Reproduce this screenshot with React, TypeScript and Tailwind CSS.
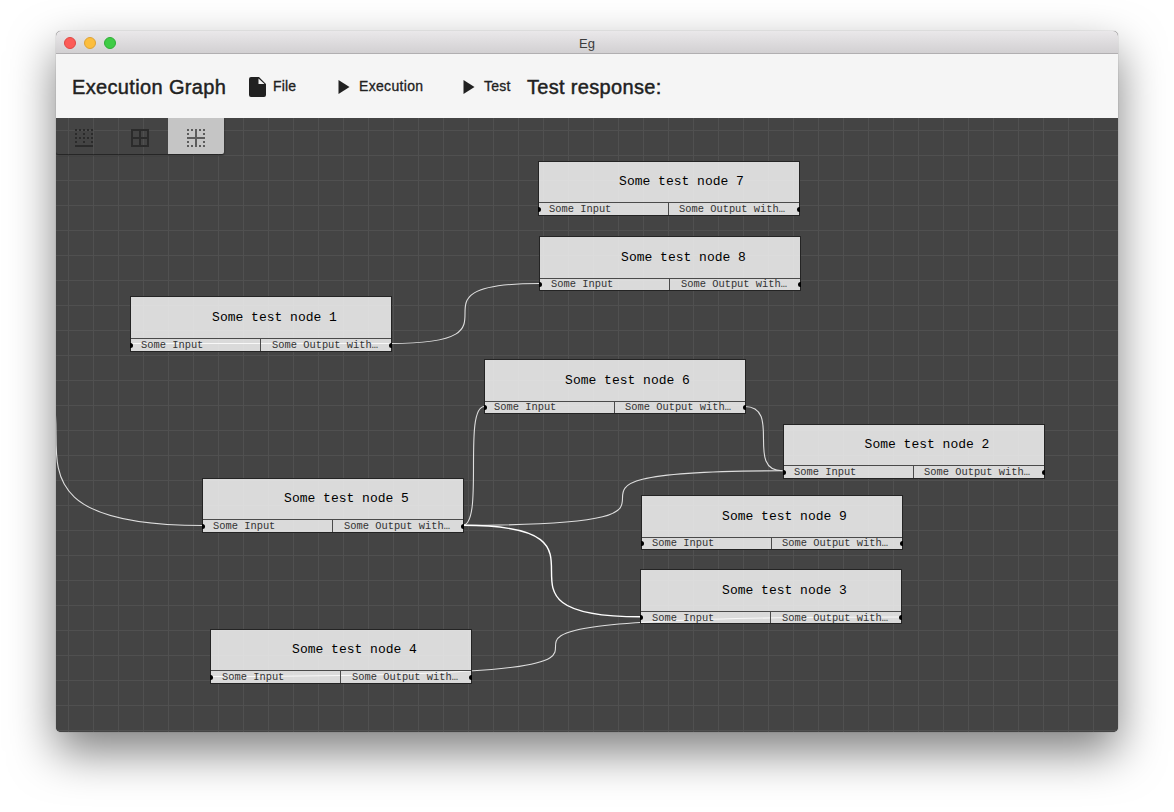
import React from "react";

type NodeSpec = {
  id: number;
  x: number;
  y: number;
  ny: number;
  by: number;
  title: string;
  input: string;
  output: string;
};

// x, y: top-left corner; ny: title divider; by: bottom edge
const nodes: NodeSpec[] = [
  { id: 7, x: 482, y: 43, ny: 84, by: 97, title: "pl-[25px] pb-[2px]", input: "pl-[10px]", output: "pl-[10px]" },
  { id: 8, x: 483, y: 118, ny: 160, by: 172, title: "pl-[27px]", input: "pl-[11px]", output: "pl-[11px]" },
  { id: 1, x: 74, y: 178, ny: 220, by: 233, title: "pl-[27px]", input: "pl-[10px]", output: "pl-[11px]" },
  { id: 6, x: 428, y: 241, ny: 283, by: 295, title: "pl-[25px]", input: "pl-[9px]", output: "pl-[10px]" },
  { id: 2, x: 727, y: 306, ny: 347, by: 360, title: "pl-[26px] pb-[2px]", input: "pl-[10px]", output: "pl-[10px]" },
  { id: 5, x: 146, y: 360, ny: 401, by: 414, title: "pl-[27px] pb-[2px]", input: "pl-[10px]", output: "pl-[11px]" },
  { id: 9, x: 585, y: 377, ny: 419, by: 431, title: "pl-[25px]", input: "pl-[10px]", output: "pl-[10px]" },
  { id: 3, x: 584, y: 451, ny: 493, by: 505, title: "pl-[27px]", input: "pl-[11px] pt-[1px]", output: "pl-[11px] pt-[1px]" },
  { id: 4, x: 154, y: 511, ny: 552, by: 565, title: "pl-[27px] pb-[2px]", input: "pl-[11px]", output: "pl-[11px]" },
];

const wire = (x1: number, y1: number, x2: number, y2: number) =>
  `M${x1} ${y1} C${x2} ${y1} ${x1} ${y2} ${x2} ${y2}`;

const wires = [
  wire(334.5, 225.5, 483.5, 165.5),
  wire(406.5, 407.3, 428.5, 288.5),
  wire(406.5, 407.3, 726.5, 352.8),
  wire(688.5, 288.5, 726.5, 352.8),
  wire(-147, 225.5, 147, 407.5),
  wire(844.5, 499, 154.5, 558.5),
  "M74 225.5 H335",
];

function GraphNode({ node }: { node: NodeSpec }) {
  return (
    <div
      className="absolute flex w-[262px] flex-col border border-[#242424] bg-white/80 bg-clip-padding font-['Liberation_Mono',monospace] text-black"
      style={{ left: node.x, top: node.y, height: node.by - node.y + 1 }}
    >
      <div
        className={`flex shrink-0 items-center justify-center border-b border-[#4a4a4a] text-[13px] leading-none ${node.title}`}
        style={{ height: node.ny - node.y }}
      >
        Some test node {node.id}
      </div>
      <div className="flex min-h-0 flex-1 text-[10.4px] leading-none text-[#333]">
        <div className={`flex w-[130px] shrink-0 items-center border-r border-[#4a4a4a] ${node.input}`}>Some Input</div>
        <div className={`flex flex-1 items-center whitespace-nowrap ${node.output}`}>Some Output with…</div>
      </div>
      <span className="absolute bottom-[3px] -left-px h-[5px] w-[3px] rounded-r-full bg-black" />
      <span className="absolute bottom-[3px] -right-px h-[5px] w-[3px] rounded-l-full bg-black" />
    </div>
  );
}

const range = (n: number) => Array.from({ length: n }, (_, i) => i);

const borderIcons = {
  bottom:
    "M9 11H7v2h2v-2zm4 4h-2v2h2v-2zM9 3H7v2h2V3zm4 8h-2v2h2v-2zM5 3H3v2h2V3zm8 4h-2v2h2V7zm4 4h-2v2h2v-2zm-4-8h-2v2h2V3zm4 0h-2v2h2V3zm2 10h2v-2h-2v2zm0 4h2v-2h-2v2zM5 7H3v2h2V7zm14-4v2h2V3h-2zm0 6h2V7h-2v2zM5 11H3v2h2v-2zM3 21h18v-2H3v2zm2-6H3v2h2v-2z",
  all: "M3 3v18h18V3H3zm8 16H5v-6h6v6zm0-8H5V5h6v6zm8 8h-6v-6h6v6zm0-8h-6V5h6v6z",
  inner:
    "M3 21h2v-2H3v2zm4 0h2v-2H7v2zM5 7H3v2h2V7zM3 17h2v-2H3v2zM9 3H7v2h2V3zM5 3H3v2h2V3zm12 0h-2v2h2V3zm2 6h2V7h-2v2zm0-6v2h2V3h-2zm-4 18h2v-2h-2v2zM13 3h-2v8H3v2h8v8h2v-8h8v-2h-8V3zm6 18h2v-2h-2v2zm0-4h2v-2h-2v2z",
};

function BorderIcon({ kind }: { kind: keyof typeof borderIcons }) {
  return (
    <svg width="24" height="24" viewBox="0 0 24 24" fill="currentColor">
      <path d={borderIcons[kind]} />
    </svg>
  );
}

function Play() {
  return (
    <svg className="mt-px shrink-0" width="12" height="14" viewBox="0 0 12 14" fill="#212121">
      <path d="M0.500 0v14l11-7z" />
    </svg>
  );
}

export default function App() {
  return (
    <div className="h-[812px] w-[1174px] overflow-hidden bg-white px-[56px] pt-[31px] font-['Liberation_Sans',Arial,sans-serif]">
      <div className="flex h-[701px] flex-col overflow-hidden rounded-[5px] bg-[#444] shadow-[0_0_1px_rgba(0,0,0,0.5),0_20px_46px_rgba(0,0,0,0.5)]">
        <header className="grid h-[23px] shrink-0 grid-cols-[1fr_auto_1fr] items-center border-b border-[#b1afb1] bg-linear-to-b from-[#eae8ea] to-[#d2d0d2] px-2">
          <div className="flex gap-2 pt-[2px]">
            <span className="size-3 rounded-full border border-[#df4744] bg-[#fc5b57]" />
            <span className="size-3 rounded-full border border-[#dea236] bg-[#fcbe3e]" />
            <span className="size-3 rounded-full border border-[#2fae36] bg-[#3fcc46]" />
          </div>
          <span className="pt-[3px] text-[13px] leading-none text-[#3c3c3c]">Eg</span>
          <span />
        </header>
        <nav className="flex h-16 shrink-0 items-center bg-[#f5f5f5] text-[14px] text-[#212121]">
          <h1 className="ml-4 w-[177px] whitespace-nowrap pt-[2px] text-[20px] font-normal tracking-[0.35px] [-webkit-text-stroke:0.45px_#212121]">
            Execution Graph
          </h1>
          <svg className="mt-px shrink-0" width="17" height="20" viewBox="0 0 17 20" fill="#212121">
            <path d="M2 0a2 2 0 0 0-2 2v16a2 2 0 0 0 2 2h13a2 2 0 0 0 2-2V7l-7-7zm7.500 1.500L15.500 7H9.500z" />
          </svg>
          <span className="ml-[7px] w-[65px] tracking-[0.15px] [-webkit-text-stroke:0.3px_#212121]">File</span>
          <Play />
          <span className="ml-[9px] w-[104px] tracking-[0.33px] [-webkit-text-stroke:0.3px_#212121]">Execution</span>
          <Play />
          <span className="ml-[9px] w-[43px] tracking-[0.25px] [-webkit-text-stroke:0.3px_#212121]">Test</span>
          <h2 className="whitespace-nowrap pt-[2px] text-[20px] font-normal tracking-[0.32px] [-webkit-text-stroke:0.45px_#212121]">
            Test response:
          </h2>
        </nav>
        <main className="relative min-h-0 flex-1 overflow-hidden bg-[#444]">
          <svg className="absolute inset-0 size-full" viewBox="0 0 1062 614" fill="none">
            <g stroke="#505050" shapeRendering="crispEdges">
              {range(43).map((i) => (
                <path key={`v${i}`} d={`M${12.5 + i * 25} 0V614`} />
              ))}
              {range(25).map((i) => (
                <path key={`h${i}`} d={`M0 ${12.5 + i * 25}H1062`} />
              ))}
            </g>
            <g stroke="#dedede" strokeWidth="1.1">
              {wires.map((d) => (
                <path key={d} d={d} />
              ))}
            </g>
            <path d={wire(406.5, 407.3, 584.5, 498.8)} stroke="#fff" strokeWidth="1.4" />
          </svg>
          {nodes.map((n) => (
            <GraphNode key={n.id} node={n} />
          ))}
          <div className="absolute left-0 top-0 flex overflow-hidden rounded-b-[2px] text-[#2b2b2b] shadow-[0_1px_2px_rgba(0,0,0,0.6)]">
            <button className="flex h-9 w-14 items-center justify-center pt-[4px]">
              <BorderIcon kind="bottom" />
            </button>
            <button className="flex h-9 w-14 items-center justify-center pt-[4px]">
              <BorderIcon kind="all" />
            </button>
            <button className="flex h-9 w-14 items-center justify-center bg-[#c5c5c5] pt-[4px] text-[#5c5c5c]">
              <BorderIcon kind="inner" />
            </button>
          </div>
        </main>
      </div>
    </div>
  );
}
